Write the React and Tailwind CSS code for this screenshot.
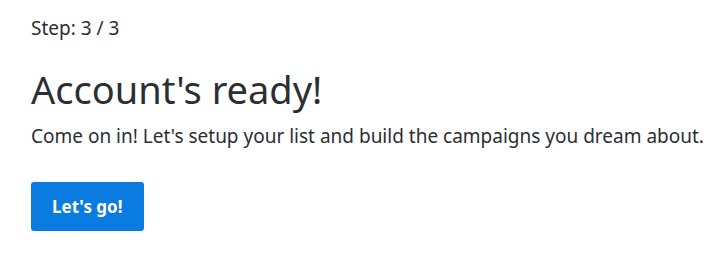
export default function App() {
  return (
    <div className="px-[31px] pt-[14px] text-[#2b2e33]" style={{ fontFamily: '"Noto Sans", sans-serif' }}>
      <div className="text-[19px] leading-[28px]">Step: 3 / 3</div>
      <h1 className="mt-[24px] text-[38px] leading-[46px] font-normal">Account's ready!</h1>
      <p className="mt-[10px] text-[19px] leading-[28px] whitespace-nowrap">
        Come on in! Let's setup your list and build the campaigns you dream about.
      </p>
      <button className="mt-[32px] h-[49px] px-[21px] rounded-[3px] bg-[#0a7be0] text-white font-bold text-[17px]">
        Let's go!
      </button>
    </div>
  );
}
